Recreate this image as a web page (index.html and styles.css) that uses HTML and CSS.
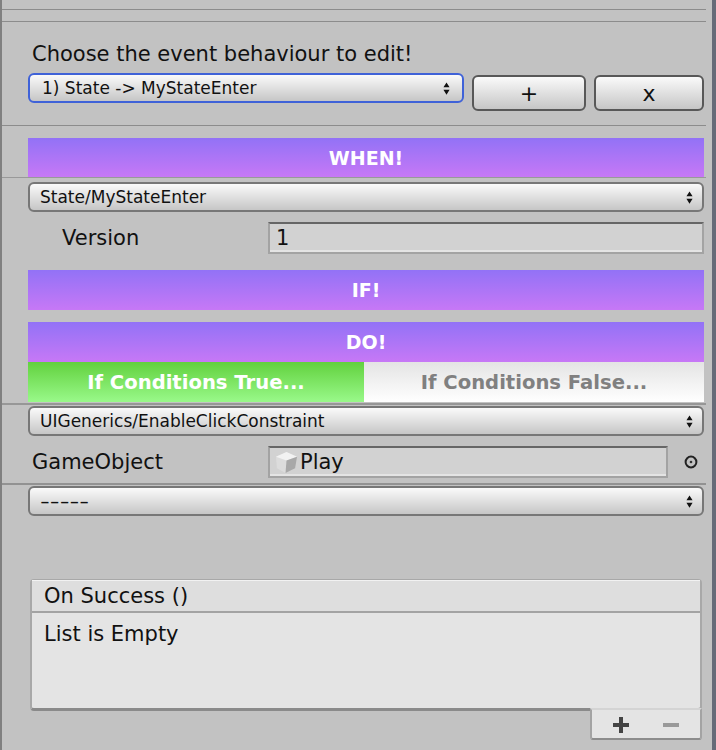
FILE: index.html
```html
<!DOCTYPE html>
<html lang="en">
<head>
  <meta charset="UTF-8" />
  <title>Event behaviour inspector</title>
  <link rel="stylesheet" href="styles.css">
</head>
<body>
  <svg class="defs" width="0" height="0">
    <symbol id="updown" viewBox="0 0 8 14">
      <path d="M4 0 L7.5 5.5 H0.5 Z M4 14 L7.5 8.5 H0.5 Z" fill="#111" />
    </symbol>
  </svg>
  <main class="inspector">
    <hr class="rule rule-a">
    <hr class="rule rule-b">

    <div class="title">Choose the event behaviour to edit!</div>
    <div class="picker-row">
      <div class="popup popup-focus">
        <span>1) State -&gt; MyStateEnter</span>
        <svg class="updown"><use href="#updown" /></svg>
      </div>
      <button class="btn btn-add">+</button>
      <button class="btn btn-del">x</button>
    </div>
    <hr class="rule rule-c">

    <div class="band band-when">WHEN!</div>
    <hr class="rule rule-d">
    <div class="popup popup-state">
      <span>State/MyStateEnter</span>
      <svg class="updown"><use href="#updown" /></svg>
    </div>
    <div class="field-row field-version">
      <label class="field-label label-indent">Version</label>
      <div class="field">1</div>
    </div>

    <div class="band band-if">IF!</div>
    <div class="band band-do">DO!</div>
    <div class="tabs">
      <div class="tab tab-true">If Conditions True...</div>
      <div class="tab tab-false">If Conditions False...</div>
    </div>
    <hr class="rule rule-e">
    <div class="popup popup-generic">
      <span>UIGenerics/EnableClickConstraint</span>
      <svg class="updown"><use href="#updown" /></svg>
    </div>
    <div class="field-row field-object">
      <label class="field-label">GameObject</label>
      <div class="field field-ref">
        <svg class="cube" viewBox="0 0 24 24">
          <path d="M12 1 L23 6 L21 18 L11 23 L2 18 L1 6 Z" fill="#dcdcdc" />
          <path d="M1 6 L12 1 L23 6 L12 10 Z" fill="#f2f2f2" />
          <path d="M12 10 L23 6 L21 18 L11 23 Z" fill="#a8a8a8" />
        </svg>
        <span>Play</span>
      </div>
      <svg class="target" viewBox="0 0 14 14">
        <circle cx="7" cy="7" r="5.4" fill="none" stroke="#222" stroke-width="2" />
        <circle cx="7" cy="7" r="1.3" fill="#333" />
      </svg>
    </div>
    <hr class="rule rule-f">
    <div class="popup popup-empty">
      <span class="dashes">-----</span>
      <svg class="updown"><use href="#updown" /></svg>
    </div>

    <section class="list">
      <div class="list-head">On Success ()</div>
      <div class="list-body">List is Empty</div>
    </section>
    <div class="list-foot">
      <svg class="foot-icon" viewBox="0 0 16 16"><path d="M6 0 H10 V6 H16 V10 H10 V16 H6 V10 H0 V6 H6 Z" fill="#444" /></svg>
      <svg class="foot-icon" viewBox="0 0 16 16"><rect x="0" y="6" width="16" height="4" fill="#999" /></svg>
    </div>
  </main>
</body>
</html>
```

FILE: styles.css
```css
html, body {
  margin: 0;
  height: 100%;
  background: #c2c2c2;
  overflow: hidden;
}

.defs {
  position: absolute;
}

.inspector {
  box-sizing: border-box;
  width: 716px;
  height: 750px;
  border-left: 2px solid #808080;
  border-right: 4px solid #666b78;
  padding-right: 8px;
  display: flex;
  flex-direction: column;
  font-family: "DejaVu Sans", sans-serif;
  color: #111;
}

.rule {
  flex: none;
  height: 1px;
  margin: 0 -2px 0 0;
  border: none;
  background: #8c8c8c;
}

.rule-a { margin-top: 9px; }
.rule-b { margin-top: 11px; }
.rule-c { margin-top: 14px; }
.rule-d { background: #999; }
.rule-e { margin-top: 1px; height: 2px; background: #979797; }
.rule-f { margin-top: 5px; background: #929292; height: 2px; }

.title {
  margin: 18px 0 0 30px;
  height: 34px;
  line-height: 28px;
  font-size: 21px;
}

.picker-row {
  display: flex;
  align-items: flex-start;
  margin-left: 26px;
}

.popup {
  box-sizing: border-box;
  flex: none;
  height: 30px;
  margin-left: 26px;
  padding: 0 9px 0 10px;
  display: flex;
  align-items: center;
  justify-content: space-between;
  border: 2px solid #777;
  border-radius: 6px;
  background: linear-gradient(#fafafa, #c6c6c6);
  font-size: 17px;
}

.popup-focus {
  width: 436px;
  height: 30px;
  margin: -1px 8px 0 0;
  padding: 0 12px;
  border-color: #3f62d8;
}

.popup-state { margin-top: 4px; }
.popup-generic { margin-top: 1px; }
.popup-empty { margin-top: 1px; }

.dashes {
  display: inline-block;
  transform: scaleX(1.6);
  transform-origin: left;
}

.updown {
  flex: none;
  width: 7px;
  height: 15px;
}

.btn {
  box-sizing: border-box;
  height: 36px;
  margin-top: 1px;
  padding: 0;
  border: 2px solid #585858;
  border-radius: 6px;
  background: linear-gradient(#fafafa, #c6c6c6);
  font-family: "DejaVu Sans", sans-serif;
  font-size: 22px;
  color: #111;
}

.btn-add { width: 114px; margin-right: 8px; }
.btn-del { width: 110px; }

.band {
  flex: none;
  height: 40px;
  margin-left: 26px;
  display: flex;
  align-items: center;
  justify-content: center;
  background: linear-gradient(#9272f6, #c778f6);
  color: #fff;
  font-size: 19px;
  font-weight: 700;
}

.band-when { margin-top: 12px; height: 39px; }
.band-if { margin-top: 16px; }
.band-do { margin-top: 12px; }

.tabs {
  flex: none;
  display: flex;
  height: 40px;
  margin-left: 26px;
}

.tab {
  flex: 1;
  display: flex;
  align-items: center;
  justify-content: center;
  font-size: 19.6px;
  font-weight: 700;
}

.tab-true {
  background: linear-gradient(#62d13e, #99f98a);
  color: #fff;
  flex: none;
  width: 336px;
}

.tab-false {
  background: linear-gradient(#e4e4e4, #fff);
  color: #808080;
}

.field-row {
  flex: none;
  display: flex;
  align-items: center;
  margin-left: 30px;
}

.field-version { margin-top: 10px; height: 32px; }
.field-object { margin-top: 10px; height: 32px; }

.field-label {
  flex: none;
  width: 236px;
  font-size: 21px;
}

.label-indent {
  padding-left: 30px;
  box-sizing: border-box;
}

.field {
  box-sizing: border-box;
  flex: 1;
  height: 32px;
  padding-left: 6px;
  display: flex;
  align-items: center;
  border: 2px solid #a3a3a3;
  border-top-color: #666;
  background: linear-gradient(#d2d2d2 92%, #e4e4e4 92%);
  font-size: 21px;
}

.field-ref {
  flex: none;
  width: 400px;
  padding-left: 5px;
  gap: 2px;
}

.cube {
  flex: none;
  width: 23px;
  height: 23px;
}

.target {
  flex: none;
  width: 14px;
  height: 14px;
  margin-left: 16px;
}

.list {
  flex: none;
  margin: 63px 2px 0 28px;
  height: 132px;
  box-sizing: border-box;
  border: 2px solid #a8a8a8;
  border-top-width: 1px;
  border-bottom: 3px solid #8a8a8a;
  border-radius: 4px;
  background: #e4e4e4;
}

.list-head {
  box-sizing: border-box;
  height: 33px;
  padding-left: 12px;
  line-height: 30px;
  border-top: 1px solid #f2f2f2;
  border-bottom: 2px solid #a3a3a3;
  background: #dedede;
  font-size: 21px;
}

.list-body {
  padding: 7px 0 0 12px;
  line-height: 28px;
  font-size: 21px;
}

.list-foot {
  box-sizing: border-box;
  flex: none;
  width: 112px;
  height: 32px;
  margin: -3px 2px 0 auto;
  padding: 2px 21px 0 21px;
  display: flex;
  align-items: center;
  justify-content: space-between;
  border: 2px solid #a3a3a3;
  border-top: 2px solid #d4d4d4;
  border-bottom: 2px solid #8c8c8c;
  border-radius: 0 0 3px 3px;
  background: #e4e4e4;
}

.foot-icon {
  flex: none;
  width: 16px;
  height: 16px;
}
```
